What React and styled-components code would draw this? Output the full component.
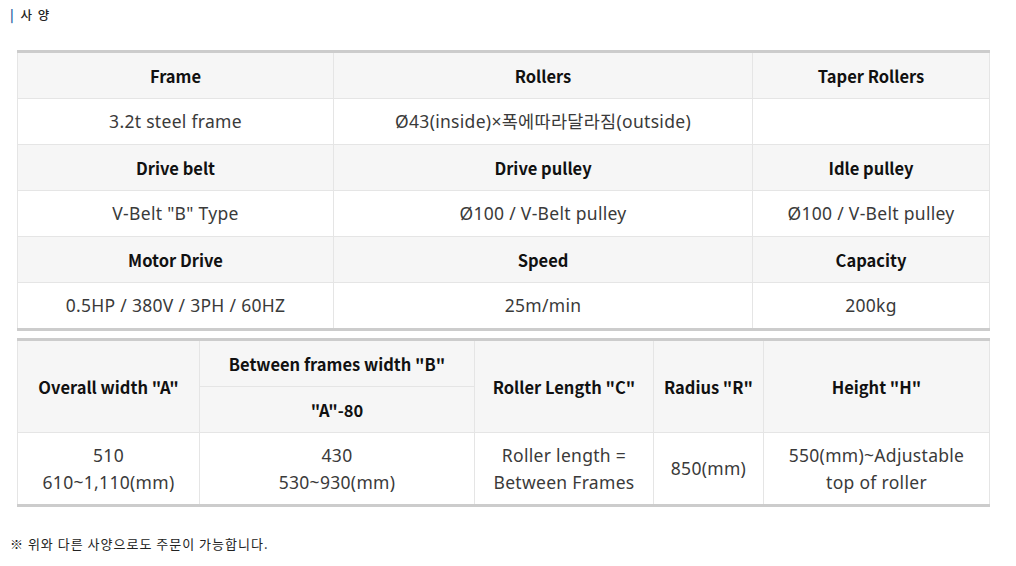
import React from "react";
import styled, { createGlobalStyle } from "styled-components";

const Global = createGlobalStyle`
  html, body { margin: 0; padding: 0; background: #fff; }
  body { font-family: "Noto Sans CJK KR", "Noto Sans", sans-serif; color: #333; }
`;

const Page = styled.div`
  width: 1016px;
  padding: 6px 0 0 0;
`;

const Title = styled.h3`
  margin: 0 0 0 10px;
  font-size: 12.5px;
  font-weight: 500;
  line-height: 18px;
  color: #222;
  letter-spacing: 1.5px;
  span { color: #1d5d9f; font-weight: 700; margin-right: 1px; }
`;

const Tables = styled.div`
  margin: 26px 0 0 17px;
  width: 972px;
  display: flex;
  flex-direction: column;
  gap: 7px;
`;

const Table = styled.table`
  width: 972px;
  border-collapse: collapse;
  table-layout: fixed;
  border-top: 3px solid #cccccc;
  border-bottom: 3px solid #cccccc;
  border-left: 1px solid #e5e5e5;
  border-right: 1px solid #e5e5e5;
`;

const Th = styled.th`
  background: #f6f6f6;
  border: 1px solid #e5e5e5;
  height: ${(p) => p.$h || 45}px;
  padding: 0;
  font-size: 16.5px;
  font-weight: 700;
  color: #111;
  text-align: center;
  vertical-align: middle;
`;

const Td = styled.td`
  border: 1px solid #e5e5e5;
  height: ${(p) => p.$h || 45}px;
  padding: 0;
  font-family: "Noto Sans", "Noto Sans CJK KR", sans-serif;
  font-size: 17.5px;
  letter-spacing: 0.3px;
  font-weight: 400;
  color: #3a3a3a;
  text-align: center;
  vertical-align: middle;
  line-height: 27px;
`;

const Note = styled.p`
  margin: 28px 0 0 10px;
  font-size: 13px;
  letter-spacing: 1px;
  line-height: 18px;
  color: #222;
`;

const spec = [
  [["Frame", "Rollers", "Taper Rollers"], ["3.2t steel frame", "Ø43(inside)×폭에따라달라짐(outside)", ""]],
  [["Drive belt", "Drive pulley", "Idle pulley"], ['V-Belt "B" Type', "Ø100 / V-Belt pulley", "Ø100 / V-Belt pulley"]],
  [["Motor Drive", "Speed", "Capacity"], ["0.5HP / 380V / 3PH / 60HZ", "25m/min", "200kg"]],
];

export default function App() {
  return (
    <Page>
      <Global />
      <Title><span>|</span> 사 양</Title>
      <Tables>
        <Table>
          <colgroup>
            <col style={{ width: 316 }} />
            <col style={{ width: 419 }} />
            <col style={{ width: 237 }} />
          </colgroup>
          <tbody>
            {spec.map(([heads, vals], i) => (
              <React.Fragment key={i}>
                <tr>{heads.map((h) => <Th key={h}>{h}</Th>)}</tr>
                <tr>{vals.map((v, j) => <Td key={j}>{v}</Td>)}</tr>
              </React.Fragment>
            ))}
          </tbody>
        </Table>
        <Table>
          <colgroup>
            <col style={{ width: 182 }} />
            <col style={{ width: 275 }} />
            <col style={{ width: 179 }} />
            <col style={{ width: 110 }} />
            <col style={{ width: 226 }} />
          </colgroup>
          <tbody>
            <tr>
              <Th rowSpan={2}>Overall width "A"</Th>
              <Th>Between frames width "B"</Th>
              <Th rowSpan={2}>Roller Length "C"</Th>
              <Th rowSpan={2}>Radius "R"</Th>
              <Th rowSpan={2}>Height "H"</Th>
            </tr>
            <tr><Th>"A"-80</Th></tr>
            <tr>
              <Td $h={71}>510<br />610~1,110(mm)</Td>
              <Td $h={71}>430<br />530~930(mm)</Td>
              <Td $h={71}>Roller length =<br />Between Frames</Td>
              <Td $h={71}>850(mm)</Td>
              <Td $h={71}>550(mm)~Adjustable<br />top of roller</Td>
            </tr>
          </tbody>
        </Table>
      </Tables>
      <Note>※ 위와 다른 사양으로도 주문이 가능합니다.</Note>
    </Page>
  );
}
